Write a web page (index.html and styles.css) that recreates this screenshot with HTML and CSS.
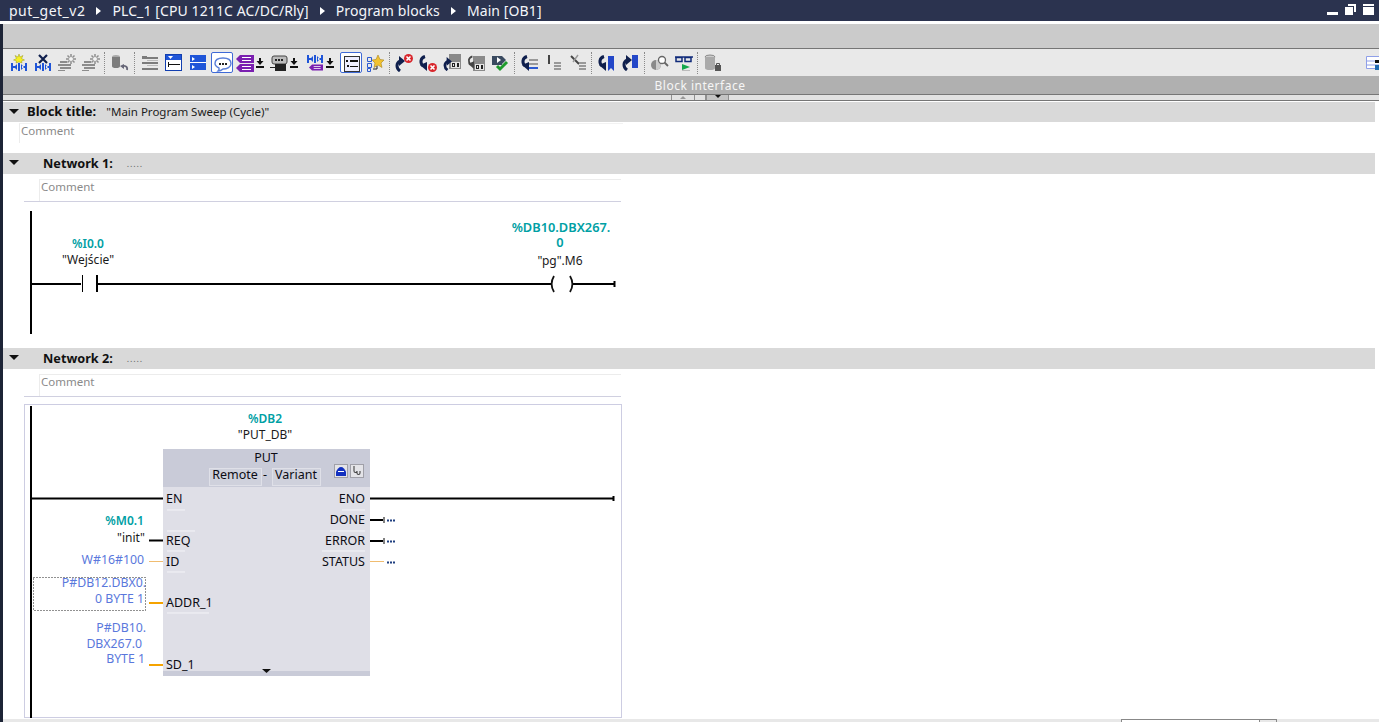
FILE: index.html
```html
<!DOCTYPE html>
<html lang="en">
<head>
<meta charset="utf-8">
<title>Main [OB1]</title>
<link rel="stylesheet" href="styles.css">
</head>
<body>
<svg class="defs" width="0" height="0" aria-hidden="true">
  <defs>
    <symbol id="net" viewBox="0 0 18 18">
      <path fill="#1f55d8" d="M1 9h2v8H1zM15 9h2v8h-2zM3 12h3v2H3zM12 12h3v2h-3zM8 9h2v8H8zM7 10v6l-3-3zM11 10v6l3-3z"/>
    </symbol>
    <symbol id="lines" viewBox="0 0 18 18">
      <path fill="#8c8c8c" d="M2 7h7v2H2zM0 10h13v2H0zM2 13h11v2H2zM0 16h7v1H0z"/>
    </symbol>
    <symbol id="spark" viewBox="0 0 18 18">
      <path stroke="#8f8f8f" stroke-width="1.500" d="M13 0v10M8 5h10M9.500 1.500l7 7M16.500 1.500l-7 7"/>
      <circle cx="13" cy="5" r="2" fill="#f4f4f4"/>
    </symbol>
    <symbol id="tagp" viewBox="0 0 18 8">
      <path fill="#7a1fb0" d="M0 4l4-4h14v8H4z"/>
      <path fill="#fff" d="M6 2h9v1H6zM6 5h9v1H6z"/>
    </symbol>
    <symbol id="down" viewBox="0 0 8 10">
      <path fill="#111" d="M3 0h2v3h2.500L4 7 .5 3H3zM0 8h8v2H0z"/>
    </symbol>
    <symbol id="arl" viewBox="0 0 10 16">
      <path fill="none" stroke="#0f1f4d" stroke-width="3" d="M6 1.500C1 3 1 8 4 11"/>
      <path fill="#0f1f4d" d="M1 10l7-3v9z"/>
    </symbol>
    <symbol id="arr" viewBox="0 0 10 16">
      <path fill="none" stroke="#0f1f4d" stroke-width="3" d="M5 15C1 12 1 7 5 5"/>
      <path fill="#0f1f4d" d="M4 0l6 5-6 5z"/>
    </symbol>
    <symbol id="arg" viewBox="0 0 10 16">
      <path fill="none" stroke="#444" stroke-width="2" d="M6 1.500C1 3 1 8 4 11"/>
      <path fill="#444" d="M1 10l7-3v9z"/>
    </symbol>
    <symbol id="err" viewBox="0 0 9 9">
      <circle cx="4.500" cy="4.500" r="4.500" fill="#d8262c"/>
      <path stroke="#fff" stroke-width="1.600" d="M2.500 2.500l4 4M6.500 2.500l-4 4"/>
    </symbol>
    <symbol id="chip" viewBox="0 0 12 15">
      <path fill="#8a8a8a" d="M0 0h12v15H0z"/>
      <path fill="#e4e4e4" d="M2 8h9v6H2z"/>
      <path fill="#222" d="M3 9h3v4H3zM8 9h2v4H8z"/>
      <path fill="#e4e4e4" d="M4 10h1v2H4z"/>
    </symbol>
  </defs>
</svg>

<div class="app">
  <header class="titlebar">
    <span class="crumb-first">put_get_v2</span><i class="crumb"></i>
    <span>PLC_1 [CPU 1211C AC/DC/Rly]</span><i class="crumb"></i>
    <span>Program blocks</span><i class="crumb"></i>
    <span>Main [OB1]</span>
    <div class="winctl">
      <svg width="11" height="11" viewBox="0 0 11 11"><path fill="#fff" d="M0 8h11v3H0z"/></svg>
      <svg width="11" height="11" viewBox="0 0 11 11"><path fill="#fff" d="M0 3h8v8H0zM3 0h8v8h-2V2H3z"/></svg>
      <svg width="11" height="11" viewBox="0 0 11 11"><path fill="#fff" d="M0 0h11v2H0zM0 3h11v8H0z"/></svg>
    </div>
  </header>

  <div class="titlegap"></div>

  <main class="workspace">
    <div class="graybar"></div>

    <nav class="toolbar">
      <span class="tool"><svg class="ico"><use href="#net"/><path fill="#f4ee20" stroke="#9a9a20" stroke-width=".5" d="M9 0l1 3 3-1.500L11.500 4.500 14.500 6l-3 1 .5 2-3-1-3 1 .5-2-3-1 3-1.500L5 1.500 8 3z"/></svg></span>
      <span class="tool"><svg class="ico"><use href="#net"/><path stroke="#0f1f4d" stroke-width="2.200" d="M5 1l8 8M13 1l-8 8"/></svg></span>
      <span class="tool"><svg class="ico"><use href="#lines"/><use href="#spark"/></svg></span>
      <span class="tool"><svg class="ico"><use href="#lines"/><use href="#spark"/></svg></span>
      <i class="sep sep-a"></i>
      <span class="tool"><svg class="ico"><ellipse cx="5" cy="3" rx="4" ry="2" fill="#aaa"/><path fill="#7d7d7d" d="M1 3h8v9a4 2 0 0 1-8 0z"/><path fill="none" stroke="#667" stroke-width="1.800" d="M16 16c1-4-3-5-5-3"/><path fill="#667" d="M9 12l4-2v5z"/></svg></span>
      <i class="sep sep-b"></i>
      <span class="tool"><svg class="ico"><path fill="#7c7c7c" d="M1 2h5v1h11v2H1zM1 8h16v2H1zM1 14h16v2H1z"/><path fill="#bbb" d="M6 6h11v1H6zM6 11h11v1H6z"/></svg></span>
      <span class="tool"><svg class="ico"><rect x=".5" y=".5" width="16" height="16" fill="#fff" stroke="#123fb0"/><path fill="#1f55d8" d="M1 1h15v5H1z"/><path fill="#fff" d="M3 2h5L5.500 5z"/><path fill="#111" d="M4 10h11v1H4zM3 8h1v5H3z"/></svg></span>
      <span class="tool"><svg class="ico"><path fill="#1f55d8" d="M1 1h16v15H1z"/><path fill="#fff" d="M1 8h16v1H1zM3 3l3 2-3 2zM3 11l3 2-3 2z"/></svg></span>
      <span class="tool tool-on"><svg class="ico"><path fill="#fff" stroke="#5b7fd8" stroke-width="1.400" d="M9 3c5 0 8 2 8 5.500S13 14 9 14c-1 1-3 2-5 2 1-1 1.500-2 1-3-2-1-4-2.500-4-4.500C1 5 4 3 9 3z"/><path fill="#222" d="M5 8h2v2H5zM8 8h2v2H8zM11 8h2v2h-2z"/></svg></span>
      <span class="tool tool-32"><svg class="ico"><use href="#tagp" width="18" height="8" y="1"/><use href="#tagp" width="18" height="8" y="10"/></svg><svg class="dn"><use href="#down"/></svg></span>
      <span class="tool tool-36"><svg class="ico"><path fill="#bbb" stroke="#444" d="M4 2h11a2 2 0 0 1 2 2v4a2 2 0 0 1-2 2H4a2 2 0 0 1-2-2V4a2 2 0 0 1 2-2z"/><path fill="#222" d="M5 5h2v2H5zM8 5h2v2H8zM11 5h2v2h-2zM5 10h11v7H5zM0 13h5v1H0z"/></svg><svg class="dn"><use href="#down"/></svg></span>
      <span class="tool tool-36"><svg class="ico"><use href="#net" y="-8"/><use href="#tagp" width="14" height="7" x="3" y="10"/></svg><svg class="dn"><use href="#down"/></svg></span>
      <span class="tool tool-on tool-26"><svg class="ico"><rect x="1.500" y="1.500" width="15" height="15" fill="#eef" stroke="#333"/><path fill="#111" d="M3 5h2v2H3zM7 5h8v2H7zM4 10h2v2H4zM7 11h8v1H7z"/></svg></span>
      <span class="tool tool-22"><svg class="ico"><path fill="none" stroke="#2c5ad0" d="M1.500 3.500h4v4h-4zM1.500 9.500h4v4h-4zM1.500 14.500h3v3h-3z"/><path fill="#f2c230" stroke="#a8841a" stroke-width=".6" d="M12 1l2 4.500 4 .5-3 3 1 4.500-4-2.500-4 2.500 1-4.500-3-3 4-.5z"/><path fill="none" stroke="#222" d="M11 12v3H7"/></svg></span>
      <i class="sep sep-c"></i>
      <span class="tool"><svg class="ico"><use href="#arr" width="10" height="16" y="2"/><use href="#err" width="9" height="9" x="9"/></svg></span>
      <span class="tool"><svg class="ico"><use href="#arl" width="10" height="16" y="1"/><use href="#err" width="9" height="9" x="9" y="9"/></svg></span>
      <span class="tool"><svg class="ico"><use href="#chip" width="12" height="15" x="6"/><use href="#arr" width="9" height="14" y="3"/></svg></span>
      <span class="tool"><svg class="ico"><use href="#chip" width="12" height="15" x="6" y="2"/><use href="#arg" width="9" height="14" y="1"/></svg></span>
      <span class="tool"><svg class="ico"><path fill="#3a4a60" d="M1 2h10l4 4-4 4v1H1z"/><path fill="#fff" d="M6 3l4 3-4 3z"/><path fill="none" stroke="#1e9a2c" stroke-width="3" d="M6 12l3 3 7-7"/></svg></span>
      <i class="sep sep-d"></i>
      <span class="tool"><svg class="ico"><use href="#arl" width="10" height="16" y="1"/><path fill="#999" d="M8 5h9v2H8zM8 9h9v2H8z"/><path fill="#2c5ad0" d="M8 13h9v2H8z"/></svg></span>
      <span class="tool"><svg class="ico"><path fill="#444" d="M3 1h2v9H3z"/><path fill="#999" d="M9 8h7v2H9zM9 11h7v2H9zM9 14h7v2H9z"/></svg></span>
      <span class="tool"><svg class="ico"><path stroke="#444" stroke-width="2" d="M2 2l8 8"/><path stroke="#999" stroke-width="1.400" d="M9 1L4 8"/><path fill="#999" d="M10 8h7v2h-7zM10 11h7v2h-7zM10 14h7v2h-7z"/></svg></span>
      <i class="sep sep-e"></i>
      <span class="tool"><svg class="ico"><use href="#arl" width="10" height="16" y="1"/><path fill="#2347c8" d="M10 2h6v15l-3-3-3 3z"/></svg></span>
      <span class="tool"><svg class="ico"><use href="#arr" width="10" height="16" y="1"/><path fill="#2347c8" d="M10 1h6v13h-6z"/></svg></span>
      <i class="sep sep-e"></i>
      <span class="tool"><svg class="ico"><circle cx="5" cy="11" r="5" fill="#8a8a8a"/><path fill="#ccc" d="M5 6a5 5 0 0 1 0 10z"/><circle cx="11" cy="6" r="3.500" fill="#fff" stroke="#666" stroke-width="1.300"/><path stroke="#666" stroke-width="1.800" d="M13.500 8.500L17 12"/></svg></span>
      <span class="tool"><svg class="ico"><path fill="none" stroke="#0f2a7a" stroke-width="1.500" d="M0 3h18M1 3.500h6v4H1zM10 3.500h6v4h-6z"/><path fill="#14a84c" d="M7 10l8 3-8 3z"/><path fill="#bbb" d="M7 16h8v1H7z"/></svg></span>
      <i class="sep sep-f"></i>
      <span class="tool"><svg class="ico"><ellipse cx="6" cy="3" rx="5" ry="2" fill="#ccc" stroke="#888"/><path fill="#aaa" d="M1 3h10v11a5 2 0 0 1-10 0z"/><path fill="#555" d="M11 11h6v6h-6z"/><path fill="none" stroke="#555" d="M12.500 11V9.500h3V11"/></svg></span>
      <span class="tool-end"><svg class="ico ico-clip"><path fill="#fff" stroke="#8f9fe8" d="M.5 1.500h17v12H.5z"/><path stroke="#8f9fe8" d="M1 6h17M1 10h17"/><path fill="#111" d="M9 5h5v3H9z"/><path fill="#1f6ab0" d="M9 10h9v5H9z"/></svg></span>
    </nav>

    <div class="ifacebar">Block interface</div>
    <div class="ifacetabs">
      <span class="itab itab-up"><i class="tri-up"></i></span>
      <span class="itab itab-mid"></span>
      <span class="itab itab-down"><i class="tri-down"></i></span>
    </div>

    <section class="editor">
      <div class="section-head head-block">
        <i class="tri-open"></i>
        <b class="head-label">Block title:</b>
        <span class="head-value">"Main Program Sweep (Cycle)"</span>
      </div>
      <div class="block-comment"><span class="comment comment-block">Comment</span></div>

      <div class="section-head head-net">
        <i class="tri-open"></i>
        <b class="head-label head-label-net">Network 1:</b>
        <span class="head-dots">.....</span>
      </div>
      <div class="net-comment"><span class="comment">Comment</span></div>

      <svg class="ladder ladder-1" width="640" height="146" viewBox="3 202 640 146">
        <path class="rail" d="M31 211v123"/>
        <path class="wire" d="M32 284h49M98 284h453M573 284h41"/>
        <path class="thin" d="M82.500 275v17"/>
        <path class="wire" d="M97 275v17M614.500 281v6"/>
        <path class="arc" d="M554 276c-3 5-3 11 0 16M570 276c3 5 3 11 0 16"/>
        <text class="addr" x="88" y="248" text-anchor="middle">%I0.0</text>
        <text class="sym" x="88" y="264" text-anchor="middle">"Wejście"</text>
        <text class="addr addr-long" x="561" y="232" text-anchor="middle">%DB10.DBX267.</text>
        <text class="addr addr-long" x="560" y="247" text-anchor="middle">0</text>
        <text class="sym" x="560" y="265" text-anchor="middle">"pg".M6</text>
      </svg>

      <div class="section-head head-net">
        <i class="tri-open"></i>
        <b class="head-label head-label-net">Network 2:</b>
        <span class="head-dots">.....</span>
      </div>
      <div class="net-comment"><span class="comment">Comment</span></div>

      <svg class="ladder ladder-2" width="640" height="322" viewBox="3 397 640 322">
        <rect class="frame" x="24.500" y="404.500" width="597" height="313"/>
        <path class="rail" d="M31 406v312"/>

        <text class="addr" x="265" y="423" text-anchor="middle">%DB2</text>
        <text class="sym" x="265" y="439" text-anchor="middle">"PUT_DB"</text>

        <rect class="fb-body" x="163" y="449" width="207" height="227"/>
        <rect class="fb-head" x="163" y="449" width="207" height="38"/>
        <rect class="fb-foot" x="163" y="671" width="207" height="5"/>
        <path class="fb-arrow" d="M262 669h9l-4.500 4z"/>
        <text class="pin" x="266" y="462" text-anchor="middle">PUT</text>
        <rect class="fb-drop" x="209.500" y="468.500" width="52" height="17"/>
        <rect class="fb-drop" x="272.500" y="468.500" width="48" height="17"/>
        <text class="pin" x="235" y="479" text-anchor="middle">Remote</text>
        <text class="pin" x="265" y="479" text-anchor="middle">-</text>
        <text class="pin" x="296" y="479" text-anchor="middle">Variant</text>
        <rect class="fb-btn" x="334.500" y="464.500" width="13" height="13"/>
        <path fill="#1230c0" d="M336 476v-4c1-3 3-5 5-5s4 2 5 5v4z"/>
        <path fill="#fff" d="M338 471h6v1h-6z"/>
        <rect class="fb-btn" x="350.500" y="464.500" width="13" height="13"/>
        <path fill="none" stroke="#444" stroke-width="1.100" d="M354 466v5c0 2 3 2 3 0v2c0 2 3 2 3 0v-2"/>

        <path class="wire" d="M32 498.500h131M370 498.500h243M613.500 496v5"/>
        <path class="wire" d="M149 540.500h14M370 520h13M370 541h13"/>
        <path class="tick" d="M384 517v6M384 538v6"/>
        <path class="bus-thin" d="M149 561.500h14M370 561.500h14"/>
        <path class="bus" d="M149 603h14M149 665h14"/>
        <path class="dots" d="M387 520.500h8M387 541.500h8M387 562.500h8"/>

        <path class="divider" d="M167 510h18M167 531h28M167 551h18M167 572h18M167 613h42M342 510h23M330 531h35M322 551h43"/>

        <text class="pin" x="166" y="503">EN</text>
        <text class="pin" x="166" y="545">REQ</text>
        <text class="pin" x="166" y="566">ID</text>
        <text class="pin" x="166" y="607">ADDR_1</text>
        <text class="pin" x="166" y="669">SD_1</text>
        <text class="pin" x="365" y="503" text-anchor="end">ENO</text>
        <text class="pin" x="365" y="524" text-anchor="end">DONE</text>
        <text class="pin" x="365" y="545" text-anchor="end">ERROR</text>
        <text class="pin" x="365" y="566" text-anchor="end">STATUS</text>

        <text class="addr" x="144" y="525" text-anchor="end">%M0.1</text>
        <text class="sym" x="145" y="542" text-anchor="end">"init"</text>
        <text class="val" x="144" y="564" text-anchor="end">W#16#100</text>
        <rect class="focus" x="33.500" y="577.500" width="112" height="33"/>
        <text class="val" x="146" y="587" text-anchor="end">P#DB12.DBX0.</text>
        <text class="val" x="144" y="603" text-anchor="end">0 BYTE 1</text>
        <text class="val" x="146" y="632" text-anchor="end">P#DB10.</text>
        <text class="val" x="142" y="648" text-anchor="end">DBX267.0</text>
        <text class="val" x="145" y="663" text-anchor="end">BYTE 1</text>
      </svg>
    </section>

    <footer class="statusbar">
      <div class="combo"><span class="combo-btn"></span></div>
    </footer>
  </main>
</div>
</body>
</html>
```
FILE: styles.css
```css
* { box-sizing: border-box; }
html, body { margin: 0; height: 100%; background: #fff; overflow: hidden; }
body { font-family: "Noto Sans", "DejaVu Sans", sans-serif; font-size: 12px; color: #111; }
.defs { position: absolute; }
.app { width: 1379px; height: 722px; display: flex; flex-direction: column; overflow: hidden; }

.titlebar { height: 21px; flex: none; display: flex; align-items: center; gap: 11px; padding-left: 9px; background: #2b334f; color: #f4f6fa; font-size: 14px; letter-spacing: .1px; white-space: nowrap; }
.crumb-first { letter-spacing: .5px; }
.crumb { width: 0; height: 0; border-left: 5px solid #fff; border-top: 4px solid transparent; border-bottom: 4px solid transparent; }
.winctl { margin-left: auto; display: flex; gap: 7px; padding-right: 5px; margin-top: -3px; }
.winctl svg { display: block; }
.titlegap { height: 3px; flex: none; background: #fff; }

.workspace { flex: 1; min-height: 0; display: flex; flex-direction: column; border-left: 3px solid #1d2436; }
.graybar { flex: none; background: #cbcbcb; border-bottom: 1px solid #767676; height: 25px; }

.toolbar { height: 27px; flex: none; display: flex; align-items: center; padding-left: 4px; background: #e9e9e9; }
.tool { width: 24px; height: 21px; flex: none; display: flex; align-items: center; justify-content: center; gap: 2px; }
.tool-32 { width: 32px; }
.tool-36 { width: 36px; }
.tool-26 { width: 22px; margin: 0 2px; }
.tool-22 { width: 22px; }
.tool-on { background: #fff; border: 1.500px solid #3f6ad6; border-radius: 2px; width: 22px; margin: 0 1px; }
.tool-26.tool-on { margin: 0 2px; }
.ico { width: 18px; height: 18px; flex: none; display: block; overflow: visible; }
.tool-on .ico { width: 16px; height: 16px; }
.dn { width: 8px; height: 10px; flex: none; display: block; }
.sep { flex: none; height: 22px; border-left: 1px dotted #8a8a8a; }
.sep-a { margin: 0 3px 0 1px; }
.sep-b { margin: 0 3px 0 2px; }
.sep-c { margin: 0 2px 0 3px; }
.sep-d { margin: 0 3px 0 2px; }
.sep-e { margin: 0 3px 0 1px; }
.sep-f { margin: 0 3px 0 1px; }
.tool-end { margin-left: auto; width: 13px; height: 18px; overflow: hidden; flex: none; }
.ico-clip { margin-top: 1px; }

.ifacebar { height: 19px; flex: none; display: flex; align-items: center; justify-content: center; padding-left: 18px; background: #b0b0b0; border-bottom: 1px solid #767676; color: #f6f6f6; font-size: 12px; letter-spacing: .5px; }
.ifacetabs { height: 5px; flex: none; display: flex; padding-left: 668px; background: #e2e2e2; }
.itab { height: 5px; display: flex; justify-content: center; align-items: flex-start; border: 1px solid #8f8f8f; border-top: 0; border-bottom: 0; }
.itab-up { width: 24px; background: #e2e2e2; }
.itab-mid { width: 11px; border-left: 0; }
.itab-down { width: 23px; background: #c4c4c4; }
.tri-up { margin-top: 1px; width: 0; height: 0; border: 3px solid transparent; border-top: 0; border-bottom: 3px solid #999; }
.tri-down { width: 0; height: 0; border: 3px solid transparent; border-bottom: 0; border-top: 3px solid #111; }

.editor { flex: 1; min-height: 0; display: flex; flex-direction: column; border-top: 1px solid #767676; padding-top: 1px; overflow: hidden; }
.section-head { flex: none; width: 1372px; display: flex; align-items: center; background: #d9d9d9; padding-left: 6px; }
.head-block { height: 20px; padding-bottom: 2px; }
.head-net { height: 21px; padding-bottom: 2px; }
.tri-open { width: 0; height: 0; border-left: 5px solid transparent; border-right: 5px solid transparent; border-top: 5px solid #111; flex: none; }
.head-label { margin-left: 8px; font-size: 13px; font-weight: 700; color: #111; }
.head-label-net { margin-left: 24px; font-size: 12.700px; }
.head-value { margin-left: 10px; font-size: 11.500px; color: #1c1c1c; }
.head-dots { margin-left: 14px; margin-top: 2px; font-size: 9px; color: #666; letter-spacing: .8px; }

.comment { display: block; padding-left: 1px; color: #8a8a8a; font-size: 11.500px; line-height: 14px; }
.block-comment { height: 31px; flex: none; padding: 1px 0 0 16px; }
.comment-block { border-left: 1px solid #ececec; border-top: 1px solid #f2f2f2; height: 20px; width: 604px; }
.net-comment { flex: none; height: 28px; width: 618px; padding: 5px 0 0 36px; }
.net-comment .comment { width: 582px; height: 22px; border-top: 1px solid #ececec; border-left: 1px solid #ececec; }
.net-comment::after { content: ""; display: block; height: 1px; margin-left: -15px; background: #d0d0e0; }

.ladder { display: block; flex: none; }
.ladder text { font-family: "Noto Sans", "DejaVu Sans", sans-serif; font-size: 12px; }
.ladder .addr { fill: #00a0a4; font-weight: 600; }
.ladder .addr-long { font-size: 12.800px; }
.ladder .sym { fill: #1a1a1a; }
.ladder .pin { fill: #0c0c14; font-size: 12.500px; }
.ladder .val { fill: #5a78dc; font-size: 12.300px; }
.rail { stroke: #000; stroke-width: 2; fill: none; }
.wire { stroke: #000; stroke-width: 2; fill: none; }
.thin { stroke: #000; stroke-width: 1; fill: none; }
.tick { stroke: #000; stroke-width: 1; fill: none; }
.arc { stroke: #111; stroke-width: 1.800; fill: none; }
.bus { stroke: #f5a300; stroke-width: 2; fill: none; }
.bus-thin { stroke: #f0bc70; stroke-width: 1; fill: none; }
.dots { stroke: #1f3f80; stroke-width: 2; stroke-dasharray: 2 1; fill: none; }
.divider { stroke: #f4f4f8; stroke-width: 1; fill: none; }
.frame { fill: none; stroke: #cdcde2; stroke-width: 1; }
.fb-body { fill: #dfdfe7; }
.fb-head { fill: #c9cbd8; }
.fb-foot { fill: #c9cbd8; }
.fb-arrow { fill: #111; }
.fb-drop { fill: #cfd1dc; stroke: #dfe0e8; stroke-width: 1; }
.fb-btn { fill: #e4e4e8; stroke: #a0a0a8; stroke-width: 1; }
.focus { fill: none; stroke: #222; stroke-width: 1; stroke-dasharray: 1 2; }

.statusbar { height: 3px; flex: none; margin-top: auto; background: #e8e8e8; padding-left: 1118px; }
.combo { width: 156px; height: 3px; background: #fff; border: 1px solid #888; border-bottom: 0; display: flex; justify-content: flex-end; }
.combo-btn { width: 17px; border-left: 1px solid #888; background: #e8e8e8; }
```
